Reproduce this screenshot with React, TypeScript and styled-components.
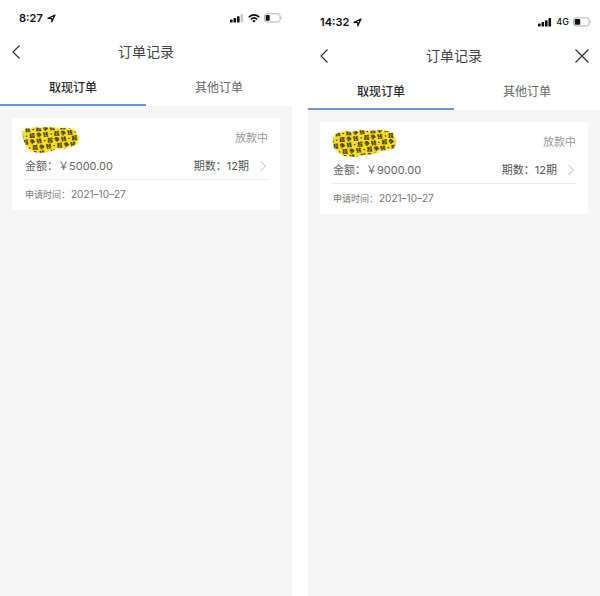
import React, { useState } from "react";
import styled, { createGlobalStyle } from "styled-components";

const GlobalStyle = createGlobalStyle`
  * { box-sizing: border-box; }
  body {
    margin: 0;
    background: #fff;
    font-family: "Liberation Sans", "Noto Sans CJK SC", sans-serif;
    color: #555;
  }
`;

const Screens = styled.main`
  display: grid;
  grid-template-columns: 1fr 1fr;
  column-gap: 16px;
  min-height: 100vh;
`;

const Phone = styled.section<{ $top: number }>`
  display: flex;
  flex-direction: column;
  padding-top: ${(p) => p.$top}px;
`;

const StatusBar = styled.div<{ $left: number; $right: number }>`
  display: flex;
  align-items: center;
  justify-content: space-between;
  height: 36px;
  padding: 0 ${(p) => p.$right}px 0 ${(p) => p.$left}px;
  color: #111;
`;

const StatusGroup = styled.div`
  display: flex;
  align-items: center;
  gap: 4px;
`;

const Clock = styled.time`
  font: 600 11px/16px Inter, sans-serif;
`;

const Network = styled.span`
  font: 500 9px/16px Inter, sans-serif;
`;

const NavBar = styled.header`
  display: grid;
  grid-template-columns: 24px 1fr 24px;
  align-items: center;
  height: 32px;
  padding: 0 6px;
`;

const IconButton = styled.button`
  display: flex;
  align-items: center;
  justify-content: center;
  width: 20px;
  height: 24px;
  padding: 0;
  border: 0;
  background: none;
  color: #333;
  cursor: pointer;
`;

const CloseButton = styled(IconButton)`
  width: 24px;
`;

const Title = styled.h1`
  margin: 0;
  font-size: 14px;
  font-weight: 400;
  line-height: 20px;
  text-align: center;
  color: #444;
`;

const Tabs = styled.div`
  display: grid;
  grid-template-columns: 1fr 1fr;
`;

const Tab = styled.button<{ $active: boolean }>`
  height: 38px;
  padding: 4px 0 0;
  border: 0;
  border-bottom: 2px solid ${(p) => (p.$active ? "#6a94dc" : "transparent")};
  background: none;
  font-family: inherit;
  font-size: 12px;
  line-height: 18px;
  font-weight: ${(p) => (p.$active ? 500 : 400)};
  color: ${(p) => (p.$active ? "#2b2b2b" : "#666")};
  cursor: pointer;
`;

const Content = styled.div`
  flex: 1;
  padding: 12px;
  background: #f6f6f6;
`;

const Card = styled.article`
  padding: 8px 12px 6px;
  background: #fff;
`;

const Row = styled.div`
  display: flex;
  align-items: center;
  justify-content: space-between;
`;

const HeadRow = styled(Row)`
  height: 27px;
`;

const AmountRow = styled(Row)`
  height: 27px;
  padding: 0 1px 1px;
  border-bottom: 1px solid #e9e9e9;
  font: 11px/18px Inter, "Noto Sans CJK SC", sans-serif;
  color: #666;
`;

const Terms = styled.a`
  display: flex;
  align-items: center;
  gap: 10px;
  color: #555;
  text-decoration: none;
`;

const Status = styled.span`
  align-self: flex-start;
  padding-top: 3px;
  font-size: 11px;
  line-height: 18px;
  color: #999;
`;

const Applied = styled.p`
  margin: 0;
  padding: 5px 1px 0;
  font: 9px/18px Inter, "Noto Sans CJK SC", sans-serif;
  color: #777;
`;

const AppliedDate = styled.time`
  margin-left: 1px;
  font-size: 10px;
`;

const Drawing = styled.svg`
  display: block;
  flex: none;
`;

const StickerDrawing = styled(Drawing)<{ $pull: number }>`
  margin-left: -${(p) => p.$pull}px;
`;

const LocationIcon = () => (
  <Drawing width="9" height="9" viewBox="0 0 9 9" aria-hidden="true">
    <path d="M1 4.4 8 1 4.8 8V4.6Z" fill="none" stroke="currentColor" strokeWidth="1.2" strokeLinejoin="round" />
  </Drawing>
);

const SignalIcon = ({ bars }: { bars: number }) => (
  <Drawing width="14" height="9" viewBox="0 0 14 9" aria-hidden="true">
    {[3, 4.5, 6.3, 8.5].map((h, i) => (
      <rect key={h} x={i * 3.5} y={8.6 - h} width="2.6" height={h} rx="0.6" fill={i < bars ? "currentColor" : "#ccc"} />
    ))}
  </Drawing>
);

const WifiIcon = () => (
  <Drawing width="12" height="9" viewBox="0 0 12 9" aria-hidden="true">
    <path d="M.8 3.2Q6-1.3 11.2 3.2M2.8 5.3Q6 2.6 9.2 5.3" fill="none" stroke="currentColor" strokeWidth="1.6" />
    <path d="M4.2 6.7Q6 5.4 7.8 6.7L6 8.6Z" fill="currentColor" />
  </Drawing>
);

const BatteryIcon = ({ level }: { level: number }) => (
  <Drawing width="19" height="10" viewBox="0 0 19 10" aria-hidden="true">
    <rect x=".5" y=".8" width="15.6" height="8.2" rx="2.2" fill="#fff" stroke="#aaa" strokeWidth=".9" />
    <rect x="1.7" y="2" width={level} height="5.8" rx=".8" fill="currentColor" />
    <path d="M17.1 3.5q1.5 1.4 0 2.8Z" fill="#999" />
  </Drawing>
);

const BackIcon = () => (
  <Drawing width="10" height="16" viewBox="0 0 10 16" aria-hidden="true">
    <path d="M8.5 1.5 2 8l6.5 6.5" fill="none" stroke="currentColor" strokeWidth="1.2" />
  </Drawing>
);

const CloseIcon = () => (
  <Drawing width="16" height="16" viewBox="0 0 16 16" aria-hidden="true">
    <path d="m1.5 1.5 13 13m0-13-13 13" fill="none" stroke="currentColor" strokeWidth="1.2" />
  </Drawing>
);

const ChevronIcon = () => (
  <Drawing width="8" height="12" viewBox="0 0 8 12" aria-hidden="true">
    <path d="m1.5 1 5 5-5 5" fill="none" stroke="#bbb" strokeWidth="1" />
  </Drawing>
);

const blobs = {
  first: {
    width: 58,
    pull: 2,
    path: "M4 2 9 3 12 1l6 1 8-1 7 1 10 0 9 1 3 5 2 4-1 5-5 3-9 3-8 0-8 3-9 1-9-2-4-5-2-5-1-5-1-4 3-2Z",
  },
  second: {
    width: 64,
    pull: 0,
    path: "M6 3 13 1l7 1 9-2 8 1 9-1 9 1 6 2 2 5 1 5-2 5-6 2-8 1-7 3-10 1-8 2-7-1-5 0-5-4-4-4-1-6 0-5 3-3Z",
  },
};

type BlobKind = keyof typeof blobs;

const Sticker = ({ kind }: { kind: BlobKind }) => {
  const { width, pull, path } = blobs[kind];
  return (
    <StickerDrawing $pull={pull} width={width} height="28" viewBox={`0 0 ${width} 28`} overflow="visible" aria-hidden="true">
      <defs>
        <clipPath id={`sticker-${kind}`}>
          <path d={path} />
        </clipPath>
      </defs>
      <path d={path} fill="#f8de1c" stroke="#faf0a0" strokeWidth="1.5" strokeLinejoin="round" />
      <g
        clipPath={`url(#sticker-${kind})`}
        fill="#2e2808"
        fontFamily="Noto Sans CJK SC, sans-serif"
        fontWeight="700"
        fontSize="5.5"
      >
        <g transform="rotate(-5 30 14)">
          {[0, 1, 2, 3, 4].map((i) => (
            <text key={i} x={-3 - ((i * 7) % 16)} y={4 + i * 6}>
              争 钱·超 争 钱·超 争 钱·超 争 钱·超 争 钱
            </text>
          ))}
        </g>
      </g>
    </StickerDrawing>
  );
};

interface ScreenProps {
  time: string;
  amount: string;
  sticker: BlobKind;
  top: number;
  left: number;
  right: number;
  indicators: React.ReactNode;
  closable?: boolean;
}

const tabNames = ["取现订单", "其他订单"];

function OrderScreen({ time, amount, sticker, top, left, right, indicators, closable }: ScreenProps) {
  const [active, setActive] = useState(0);
  return (
    <Phone $top={top}>
      <StatusBar $left={left} $right={right}>
        <StatusGroup>
          <Clock>{time}</Clock>
          <LocationIcon />
        </StatusGroup>
        <StatusGroup>{indicators}</StatusGroup>
      </StatusBar>
      <NavBar>
        <IconButton type="button" aria-label="返回">
          <BackIcon />
        </IconButton>
        <Title>订单记录</Title>
        {closable && (
          <CloseButton type="button" aria-label="关闭">
            <CloseIcon />
          </CloseButton>
        )}
      </NavBar>
      <Tabs role="tablist">
        {tabNames.map((name, i) => (
          <Tab key={name} type="button" role="tab" aria-selected={active === i} $active={active === i} onClick={() => setActive(i)}>
            {name}
          </Tab>
        ))}
      </Tabs>
      <Content>
        <Card>
          <HeadRow>
            <Sticker kind={sticker} />
            <Status>放款中</Status>
          </HeadRow>
          <AmountRow>
            <span>金额：￥{amount}</span>
            <Terms href="#order">
              期数：12期
              <ChevronIcon />
            </Terms>
          </AmountRow>
          <Applied>
            申请时间：<AppliedDate>2021–10–27</AppliedDate>
          </Applied>
        </Card>
      </Content>
    </Phone>
  );
}

export default function App() {
  return (
    <>
      <GlobalStyle />
      <Screens>
        <OrderScreen
          time="8:27"
          amount="5000.00"
          sticker="first"
          top={0}
          left={19}
          right={9}
          indicators={
            <>
              <SignalIcon bars={3} />
              <WifiIcon />
              <BatteryIcon level={4} />
            </>
          }
        />
        <OrderScreen
          time="14:32"
          amount="9000.00"
          sticker="second"
          top={4}
          left={12}
          right={8}
          closable
          indicators={
            <>
              <SignalIcon bars={4} />
              <Network>4G</Network>
              <BatteryIcon level={5.5} />
            </>
          }
        />
      </Screens>
    </>
  );
}
